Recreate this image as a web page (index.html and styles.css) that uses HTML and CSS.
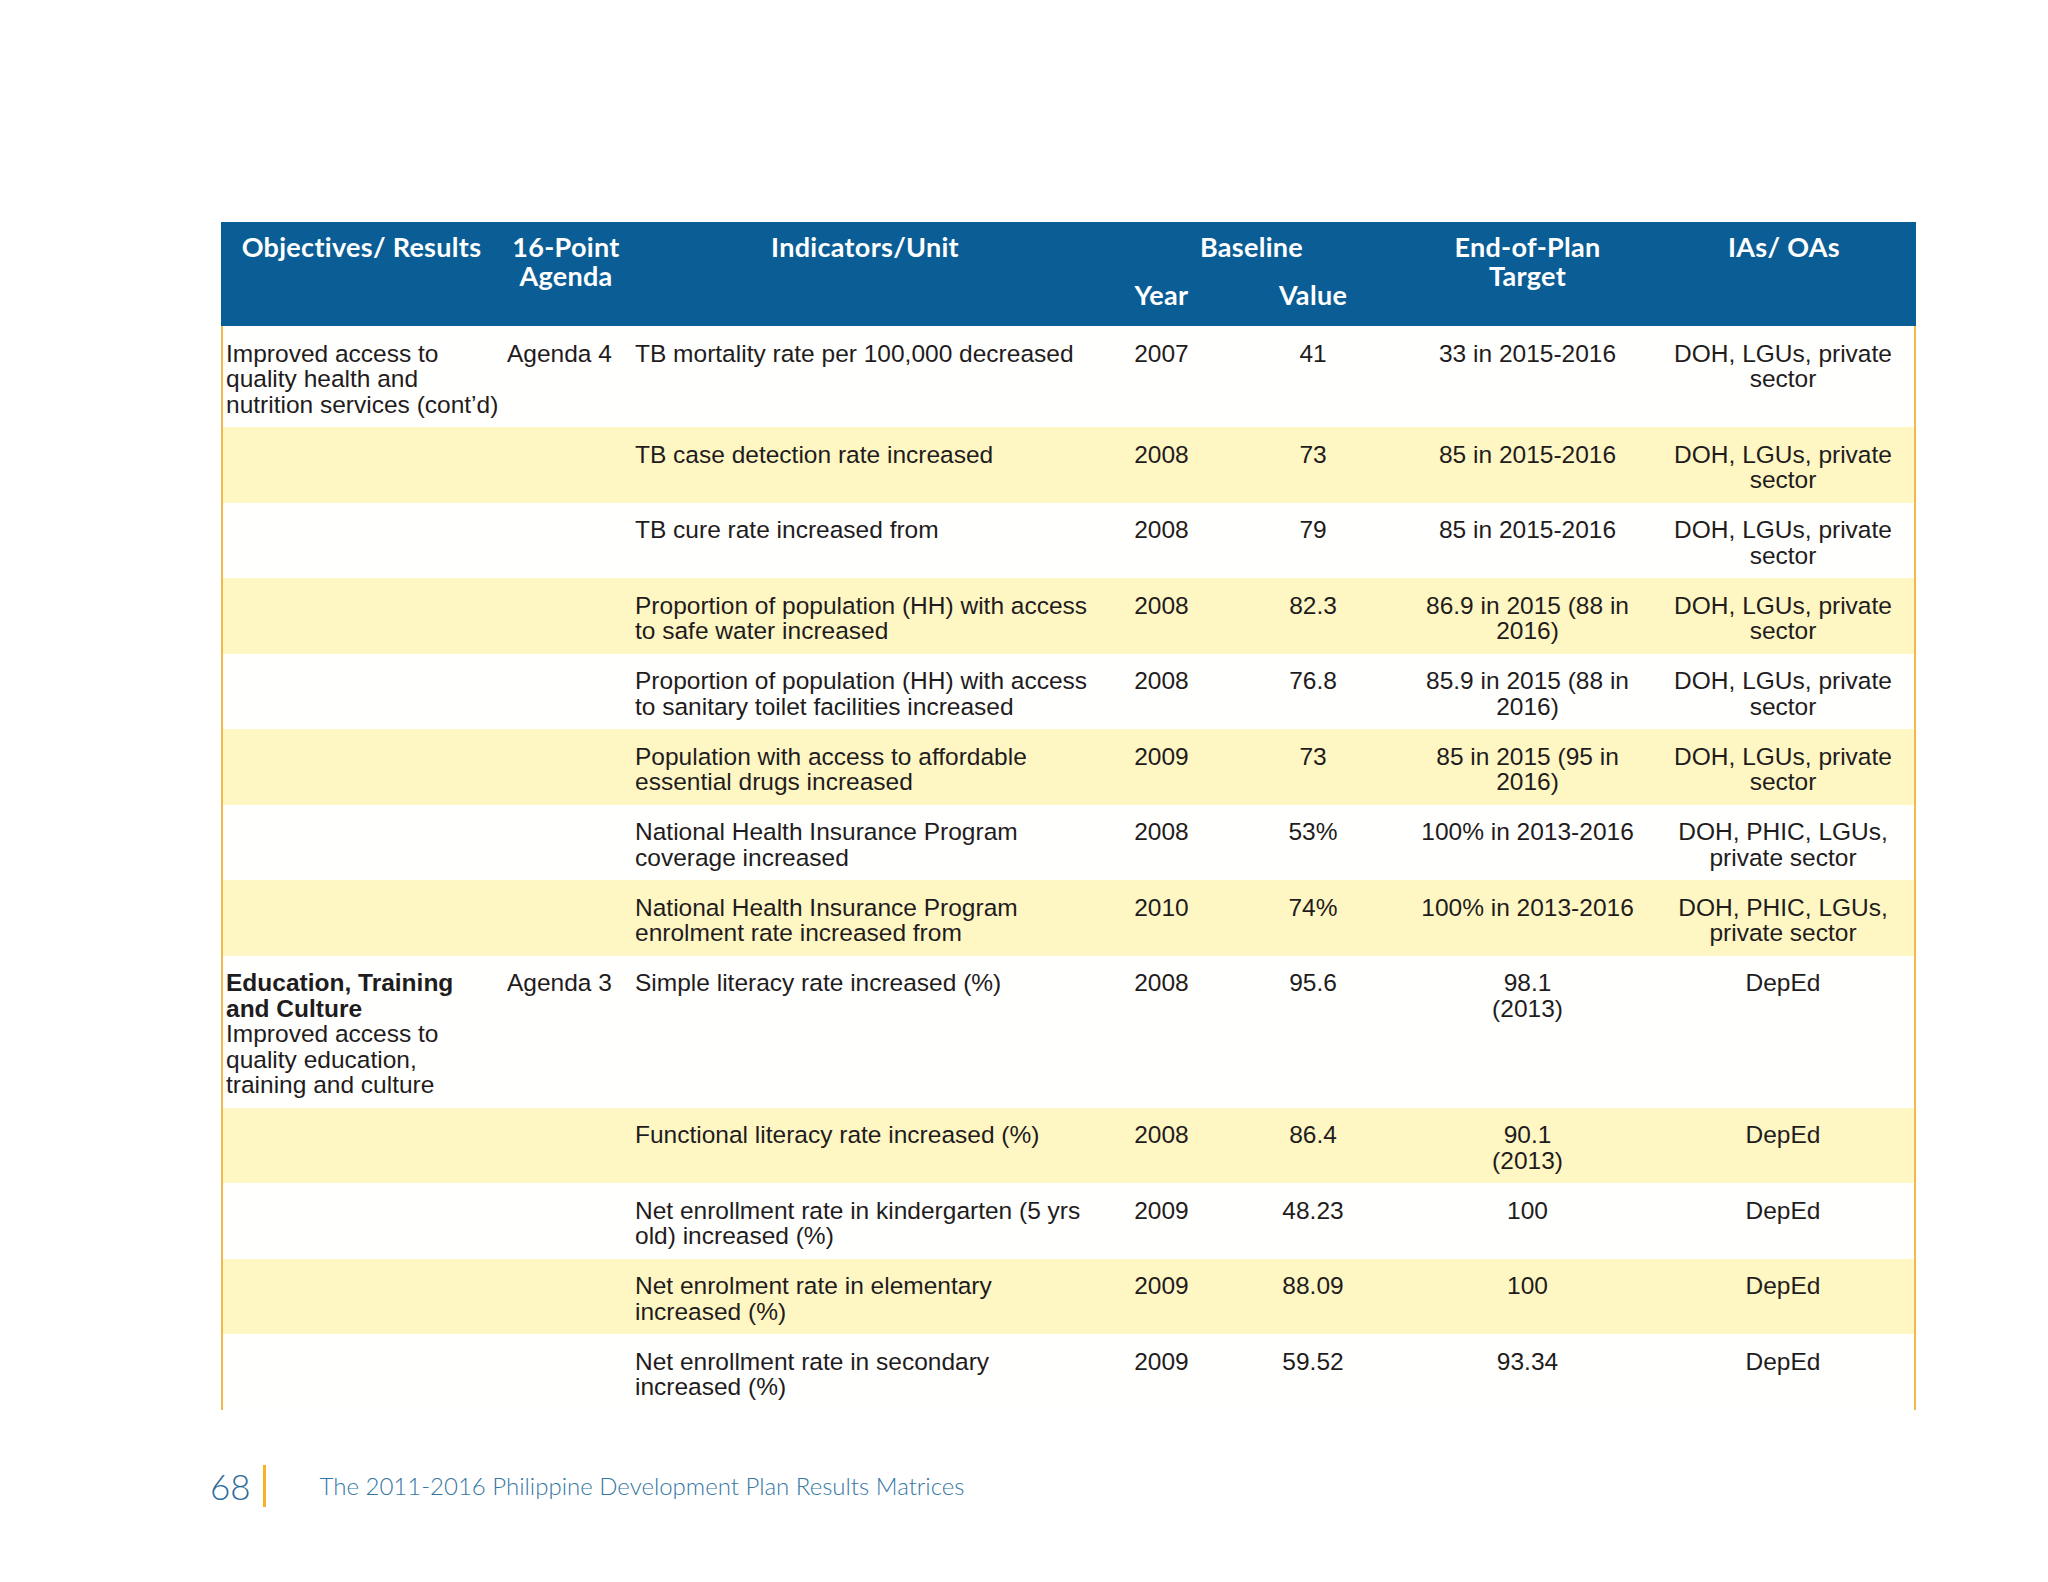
FILE: index.html
```html
<!DOCTYPE html>
<html lang="en">
<head>
<meta charset="utf-8">
<title>Results Matrices</title>
<link rel="stylesheet" href="styles.css">
</head>
<body>
<div class="page">
  <table class="matrix">
    <colgroup>
      <col class="c-obj"><col class="c-agenda"><col class="c-ind"><col class="c-year"><col class="c-value"><col class="c-target"><col class="c-ias">
    </colgroup>
    <thead>
      <tr class="h-top">
        <th rowspan="2">Objectives/ Results</th>
        <th rowspan="2">16-Point<br>Agenda</th>
        <th rowspan="2">Indicators/Unit</th>
        <th colspan="2" class="h-group">Baseline</th>
        <th rowspan="2">End-of-Plan<br>Target</th>
        <th rowspan="2">IAs/ OAs</th>
      </tr>
      <tr class="h-sub">
        <th>Year</th>
        <th>Value</th>
      </tr>
    </thead>
    <tbody>
      <tr class="r-3">
        <td>Improved access to quality health and nutrition services (cont’d)</td>
        <td>Agenda 4</td>
        <td>TB mortality rate per 100,000 decreased</td>
        <td class="ctr">2007</td>
        <td class="ctr">41</td>
        <td class="ctr">33 in 2015-2016</td>
        <td class="ctr">DOH, LGUs, private sector</td>
      </tr>
      <tr class="alt">
        <td></td><td></td>
        <td>TB case detection rate increased</td>
        <td class="ctr">2008</td>
        <td class="ctr">73</td>
        <td class="ctr">85 in 2015-2016</td>
        <td class="ctr">DOH, LGUs, private sector</td>
      </tr>
      <tr>
        <td></td><td></td>
        <td>TB cure rate increased from</td>
        <td class="ctr">2008</td>
        <td class="ctr">79</td>
        <td class="ctr">85 in 2015-2016</td>
        <td class="ctr">DOH, LGUs, private sector</td>
      </tr>
      <tr class="alt">
        <td></td><td></td>
        <td>Proportion of population (HH) with access to safe water increased</td>
        <td class="ctr">2008</td>
        <td class="ctr">82.3</td>
        <td class="ctr">86.9 in 2015 (88 in 2016)</td>
        <td class="ctr">DOH, LGUs, private sector</td>
      </tr>
      <tr>
        <td></td><td></td>
        <td>Proportion of population (HH) with access to sanitary toilet facilities increased</td>
        <td class="ctr">2008</td>
        <td class="ctr">76.8</td>
        <td class="ctr">85.9 in 2015 (88 in 2016)</td>
        <td class="ctr">DOH, LGUs, private sector</td>
      </tr>
      <tr class="alt">
        <td></td><td></td>
        <td>Population with access to affordable essential drugs increased</td>
        <td class="ctr">2009</td>
        <td class="ctr">73</td>
        <td class="ctr">85 in 2015 (95 in 2016)</td>
        <td class="ctr">DOH, LGUs, private sector</td>
      </tr>
      <tr>
        <td></td><td></td>
        <td>National Health Insurance Program coverage increased</td>
        <td class="ctr">2008</td>
        <td class="ctr">53%</td>
        <td class="ctr">100% in 2013-2016</td>
        <td class="ctr">DOH, PHIC, LGUs, private sector</td>
      </tr>
      <tr class="alt">
        <td></td><td></td>
        <td>National Health Insurance Program enrolment rate increased from</td>
        <td class="ctr">2010</td>
        <td class="ctr">74%</td>
        <td class="ctr">100% in 2013-2016</td>
        <td class="ctr">DOH, PHIC, LGUs, private sector</td>
      </tr>
      <tr>
        <td><strong>Education, Training and Culture</strong><br>Improved access to quality education, training and culture</td>
        <td>Agenda 3</td>
        <td>Simple literacy rate increased (%)</td>
        <td class="ctr">2008</td>
        <td class="ctr">95.6</td>
        <td class="ctr">98.1<br>(2013)</td>
        <td class="ctr">DepEd</td>
      </tr>
      <tr class="alt">
        <td></td><td></td>
        <td>Functional literacy rate increased (%)</td>
        <td class="ctr">2008</td>
        <td class="ctr">86.4</td>
        <td class="ctr">90.1<br>(2013)</td>
        <td class="ctr">DepEd</td>
      </tr>
      <tr>
        <td></td><td></td>
        <td>Net enrollment rate in kindergarten (5 yrs old) increased (%)</td>
        <td class="ctr">2009</td>
        <td class="ctr">48.23</td>
        <td class="ctr">100</td>
        <td class="ctr">DepEd</td>
      </tr>
      <tr class="alt">
        <td></td><td></td>
        <td>Net enrolment rate in elementary increased (%)</td>
        <td class="ctr">2009</td>
        <td class="ctr">88.09</td>
        <td class="ctr">100</td>
        <td class="ctr">DepEd</td>
      </tr>
      <tr>
        <td></td><td></td>
        <td>Net enrollment rate in secondary increased (%)</td>
        <td class="ctr">2009</td>
        <td class="ctr">59.52</td>
        <td class="ctr">93.34</td>
        <td class="ctr">DepEd</td>
      </tr>
    </tbody>
  </table>

  <footer class="folio">
    <span class="folio-num">68</span>
    <span class="folio-bar"></span>
    <span class="folio-title">The 2011-2016 Philippine Development Plan Results Matrices</span>
  </footer>
</div>
</body>
</html>
```

FILE: styles.css
```css
html, body {
  margin: 0;
  padding: 0;
  background: #ffffff;
}

.page {
  padding: 222px 0 0 210px;
  font-family: "Liberation Sans", Arial, sans-serif;
  color: #1f1c1d;
}

.matrix {
  margin-left: 11px;
  width: 1695px;
  table-layout: fixed;
  border-collapse: separate;
  border-spacing: 0;
  font-size: 24.5px;
  line-height: 25.5px;
}

.c-obj { width: 281px; }
.c-agenda { width: 128px; }
.c-ind { width: 470px; }
.c-year { width: 123px; }
.c-value { width: 180px; }
.c-target { width: 249px; }
.c-ias { width: 264px; }

.matrix thead th {
  background: #0a5e95;
  color: #ffffff;
  font-family: "Lato", "Liberation Sans", sans-serif;
  font-weight: 700;
  font-size: 27px;
  letter-spacing: 0.3px;
  line-height: 29px;
  text-align: center;
  vertical-align: top;
  padding: 10px 4px 0;
}

.matrix thead .h-top .h-group {
  padding-bottom: 13px;
}

.matrix thead .h-sub th {
  padding: 6px 4px 17px;
}

.matrix td {
  vertical-align: top;
  padding: 14.5px 5px 10px;
  background: #fffffe;
}

.matrix td:first-child {
  border-left: 2px solid #f2b84b;
  padding-left: 3px;
  padding-right: 2px;
}

.matrix td:last-child {
  border-right: 2px solid #f2b84b;
}

.matrix tr.alt td {
  background: #fff7c3;
}

.matrix td.ctr {
  text-align: center;
}

.matrix strong {
  font-weight: 700;
}

.folio {
  display: flex;
  align-items: center;
  margin-top: 55px;
  height: 42px;
  font-family: "Lato", "Liberation Sans", sans-serif;
  font-weight: 300;
}

.folio-num {
  font-size: 35px;
  color: #2d6c9c;
  line-height: 42px;
}

.folio-bar {
  width: 3px;
  height: 42px;
  background: #f5b324;
  margin-left: 12px;
}

.folio-title {
  margin-left: 54px;
  font-size: 24px;
  color: #3577a4;
  line-height: 42px;
}
```
